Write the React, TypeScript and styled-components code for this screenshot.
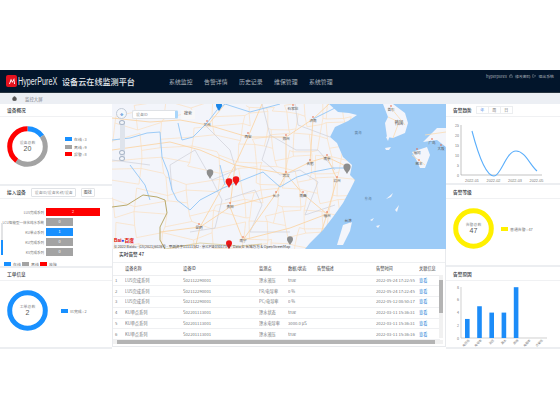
import React from 'react';
import styled, { createGlobalStyle } from 'styled-components';
import { Home, Lock, LogOut } from 'lucide-react';

const GlobalStyle = createGlobalStyle`
	html, body {
		margin: 0;
		padding: 0;
		background: #fff;
		font-family: "Noto Sans CJK SC", "Liberation Sans", sans-serif;
	}
`;

const Page = styled.div`
	width: 560px;
	height: 420px;
	padding-top: 70px;
	box-sizing: border-box;
	overflow: hidden;
	background: #fff;
`;

const TopBar = styled.header`
	height: 23px;
	background: #02152b;
	display: flex;
	align-items: center;
	padding: 0 6px;
	color: #fff;
	position: relative;
	border-bottom: 1px solid #27333f;
	box-sizing: border-box;
`;

const LogoMark = styled.div`
	width: 11px;
	height: 12px;
	border-radius: 2px;
	background: #e5121f;
	display: flex;
	align-items: center;
	justify-content: center;
`;

const Brand = styled.div`
	font-family: "Liberation Sans", sans-serif;
	font-size: 10px;
	margin-left: 1px;
	width: 44px;
	color: #e6e9ed;
	white-space: nowrap;
	transform: scaleX(0.72);
	transform-origin: left center;
`;

const AppTitle = styled.div`
	font-size: 8.1px;
	font-weight: 500;
	color: #e4e8ec;
	width: 107px;
	white-space: nowrap;
`;

const Nav = styled.nav`
	display: flex;
	gap: 12px;
`;

const NavItem = styled.span`
	font-size: 5.9px;
	color: #a9b1b9;
	width: 23px;
	white-space: nowrap;
`;

const UserMenu = styled.div`
	position: absolute;
	right: 6px;
	top: 3px;
	display: flex;
	align-items: center;
	gap: 2px;
	font-size: 3.9px;
	color: #aab2ba;
`;

const Crumbs = styled.div`
	height: 11px;
	background: #eceff4;
	display: flex;
	align-items: center;
	padding-left: 12px;
	gap: 8px;
	font-size: 4.4px;
	color: #7b8087;
`;

const Main = styled.main`
	display: grid;
	grid-template-columns: 112px 334px 114px;
	height: 245px;
`;

const Side = styled.div`
	display: flex;
	flex-direction: column;
	background: #fff;
`;

const Panel = styled.section<{ $height: number }>`
	height: ${({ $height }) => $height}px;
	flex: 0 0 auto;
	position: relative;
	border-bottom: 2px solid #eceef1;
	box-sizing: border-box;
	overflow: hidden;
`;

const PanelHead = styled.div<{ $height?: number }>`
	height: ${({ $height }) => $height ?? 13}px;
	display: flex;
	align-items: center;
	gap: 5px;
	padding-left: 7px;
	border-bottom: 1px solid #f0f1f3;
	box-sizing: border-box;
`;

const PanelTitle = styled.div`
	font-size: 4.7px;
	font-weight: 500;
	color: #33373c;
	white-space: nowrap;
`;

const Tabs = styled.div`
	display: flex;
`;

const Tab = styled.span<{ $on?: boolean }>`
	width: 13px;
	height: 8px;
	border: 1px solid #eceef0;
	margin-left: -1px;
	font-size: 4px;
	line-height: 7px;
	text-align: center;
	color: ${({ $on }) => ($on ? '#4d8fe8' : '#777')};
	box-sizing: border-box;
`;

const DonutRow = styled.div<{ $gap: number; $top: number }>`
	display: flex;
	align-items: center;
	gap: ${({ $gap }) => $gap}px;
	padding: ${({ $top }) => $top}px 0 0 7px;
`;

const DonutBox = styled.div`
	width: 41px;
	height: 41px;
	position: relative;
	flex: 0 0 auto;
`;

const DonutText = styled.div`
	position: absolute;
	inset: 0;
	display: flex;
	flex-direction: column;
	align-items: center;
	justify-content: center;
	font-size: 3.9px;
	line-height: 5px;
	color: #8a8d91;
`;

const DonutValue = styled.div`
	font-family: "Liberation Sans", sans-serif;
	font-size: 7px;
	line-height: 8px;
	color: #555;
`;

const Legend = styled.div<{ $row?: boolean }>`
	display: flex;
	flex-direction: ${({ $row }) => ($row ? 'row' : 'column')};
	gap: ${({ $row }) => ($row ? '1px' : '3.5px')};
`;

const LegendItem = styled.div<{ $row?: boolean }>`
	display: flex;
	align-items: center;
	gap: 2px;
	font-size: 3.9px;
	line-height: 4px;
	color: #777;
	white-space: nowrap;
	${({ $row }) => ($row ? 'width: 17px;' : '')}
`;

const Swatch = styled.i<{ $color: string }>`
	display: block;
	width: 7px;
	height: 4px;
	background: ${({ $color }) => $color};
`;

const FakeInput = styled.div<{ $width: number }>`
	width: ${({ $width }) => $width}px;
	height: 9px;
	border: 1px solid #dfe2e6;
	border-radius: 1px;
	box-sizing: border-box;
	background: #fff;
	font-size: 3.9px;
	line-height: 7px;
	padding-left: 3px;
	color: #8b8e92;
	white-space: nowrap;
	overflow: hidden;
`;

const FakeButton = styled.div<{ $width: number }>`
	width: ${({ $width }) => $width}px;
	height: 9px;
	border: 1px solid #e3e5e8;
	border-radius: 1px;
	box-sizing: border-box;
	background: #fff;
	font-size: 4px;
	line-height: 7px;
	text-align: center;
	color: #555;
`;

const BarList = styled.div`
	display: flex;
	flex-direction: column;
	gap: 2px;
	padding: 9px 0 0 2px;
	height: 59px;
	box-sizing: border-box;
`;

const BarRow = styled.div`
	display: flex;
	align-items: center;
	height: 8px;
`;

const BarLabel = styled.div`
	width: 44px;
	text-align: right;
	padding-right: 2px;
	box-sizing: border-box;
	font-size: 3.5px;
	color: #777;
	white-space: nowrap;
`;

const BarTrack = styled.div`
	width: 54px;
	height: 8px;
`;

const BarFill = styled.div<{ $color: string; $wide?: boolean }>`
	width: ${({ $wide }) => ($wide ? '54px' : '27px')};
	height: 8px;
	background: ${({ $color }) => $color};
	color: #fff;
	font-size: 3.8px;
	line-height: 8px;
	text-align: center;
`;

const SideScroll = styled.div`
	position: absolute;
	left: 1px;
	top: 37px;
	bottom: 11px;
	width: 2px;
	background: #e2e3e5;

	&::after {
		content: '';
		position: absolute;
		left: 0;
		right: 0;
		bottom: 0;
		height: 15px;
		background: #1890ff;
	}
`;

const BarLegend = styled.div`
	padding: 4px 0 0 4px;
`;

const Center = styled.div`
	display: flex;
	flex-direction: column;
	min-width: 0;
`;

const MapArea = styled.div`
	height: 145px;
	position: relative;
	overflow: hidden;
	background: #f3f5fb;
`;

const MapSvg = styled.svg`
	display: block;
`;

const NavDisc = styled.div`
	position: absolute;
	left: 4px;
	top: 4px;
	width: 11px;
	height: 11px;
	border-radius: 50%;
	border: 1px solid #c2cbd8;
	background: #f4f7fb;
	box-sizing: border-box;
	display: flex;
	align-items: center;
	justify-content: center;
	color: #4f8ed8;
	font-size: 4px;
`;

const ZoomRail = styled.div`
	position: absolute;
	left: 7.5px;
	top: 17px;
	width: 5px;
	height: 39px;
	background: #dfe4ec;
	border-radius: 2px;
`;

const ZoomKnob = styled.div<{ $top: number }>`
	position: absolute;
	left: -0.5px;
	top: ${({ $top }) => $top}px;
	width: 6px;
	height: 5px;
	border-radius: 50%;
	background: #f2f5f9;
	border: 1px solid #a9b6c8;
	box-sizing: border-box;
`;

const MapSearch = styled.div`
	position: absolute;
	left: 20px;
	top: 6px;
	display: flex;
	gap: 1px;
	align-items: center;
`;

const SearchInput = styled(FakeInput)`
	height: 9px;
	border-right: 3px solid #a9d6fb;
	border-radius: 2px;
`;

const SearchButton = styled(FakeButton)`
	margin-left: 2px;
	border: none;
	background: #f8f8f8;
`;

const Attribution = styled.div`
	position: absolute;
	left: 2px;
	bottom: 0;
	font-size: 3.6px;
	line-height: 5px;
	white-space: nowrap;
	color: #444;
`;

const BaiduMark = styled.div`
	position: absolute;
	left: 2px;
	bottom: 5px;
	font-family: "Liberation Sans", "Noto Sans CJK SC", sans-serif;
	font-weight: 700;
	font-size: 4.8px;
	color: #e10601;
	line-height: 6px;
`;

const BaiduDot = styled.span`
	color: #2932e1;
`;

const AlarmPanel = styled.section`
	height: 98px;
	position: relative;
	overflow: hidden;
	border: 1px solid #e8eaed;
	border-top: none;
	box-sizing: border-box;
	background: #fff;
`;

const AlarmTitle = styled.div`
	height: 14px;
	display: flex;
	align-items: center;
	padding: 0 0 4px 6px;
	font-size: 4.7px;
	font-weight: 500;
	color: #33373c;
	border-bottom: 1px solid #eef0f2;
	box-sizing: border-box;
`;

const Table = styled.table`
	border-collapse: collapse;
	table-layout: fixed;
	width: 327px;
	font-size: 4.2px;
	line-height: 5px;
	color: #73767a;
`;

const Th = styled.th<{ $width: number }>`
	width: ${({ $width }) => $width}px;
	height: 11.5px;
	padding: 0;
	text-align: left;
	font-weight: 500;
	color: #5f6266;
	background: #fff;
	border-bottom: 1px solid #edeef0;
	white-space: nowrap;
	overflow: hidden;
`;

const Td = styled.td`
	height: 9.8px;
	padding: 0;
	border-bottom: 1px solid #eff0f2;
	white-space: nowrap;
	overflow: hidden;
`;

const LinkText = styled.span`
	color: #1f7fd6;
`;

const VScroll = styled.div`
	position: absolute;
	left: 326px;
	top: 26px;
	width: 4px;
	height: 63px;
	background: #f1f1f1;

	&::after {
		content: '';
		position: absolute;
		left: 0;
		right: 0;
		top: 5px;
		height: 33px;
		background: #b4b4b4;
	}
`;

const HScroll = styled.div`
	position: absolute;
	left: 0;
	top: 91px;
	width: 330px;
	height: 4px;
	background: #f1f1f1;

	&::after {
		content: '';
		position: absolute;
		left: 4px;
		width: 318px;
		top: 0;
		bottom: 0;
		background: #b4b4b4;
	}
`;

const ChartSvg = styled.svg`
	display: block;
`;

const overviewLegend = [
	{ color: '#1890ff', text: '在线 : 3' },
	{ color: '#a3a3a3', text: '离线 : 9' },
	{ color: '#ff0000', text: '报警 : 8' },
];

const devices = [
	{ name: 'LUS完成系列', color: '#ff0000', value: '2', wide: true },
	{ name: 'LCU智能型一体化纯水系统', color: '#a3a3a3', value: '0' },
	{ name: 'KU单点系列', color: '#1890ff', value: '1' },
	{ name: 'KU完成系列', color: '#a3a3a3', value: '0' },
	{ name: 'KS完成系列', color: '#a3a3a3', value: '0' },
];

const alarms = [
	['1', 'LUS完成系列', 'S02112290001', '漂水液压', 'true', '2022-05-24 17:22:55'],
	['2', 'LUS完成系列', 'S02112290001', 'FR/电导率', '0 %', '2022-05-24 17:22:45'],
	['3', 'LUS完成系列', 'S02112290001', 'PC/电导率', '0 %', '2022-05-12 08:50:17'],
	['4', 'KU单点系列', 'S02201113001', '漂水状态', 'true', '2022-03-11 15:36:31'],
	['5', 'KU单点系列', 'S02201113001', '漂水电导率', '3000.0 μS', '2022-03-11 15:36:31'],
	['6', 'KU单点系列', 'S02201113001', '漂水液压', 'true', '2022-03-11 15:36:16'],
];

const navItems = ['系统监控', '告警详情', '历史记录', '维保管理', '系统管理'];

// light road mesh, denser to the east like the base map
function buildMesh() {
	const jitter = (a: number, b: number) => Math.sin(a * 12.9 + b * 78.2) * 4;
	const out: string[] = [];
	const xs: number[] = [];
	for (let x = 112; x < 380; x += x < 220 ? 26 : 11) xs.push(x);
	for (let yi = 0; yi < 14; yi++) {
		const y = 104 + yi * 11;
		xs.forEach((x, xi) => {
			const ax = x + jitter(x, y);
			const ay = y + jitter(y, x);
			const nx = xs[xi + 1];
			if (nx && (xi + yi) % 4 !== 0) {
				out.push(`M${ax} ${ay}L${nx + jitter(nx, y)} ${y + jitter(y, nx)}`);
			}
			if ((xi * 3 + yi) % 5 !== 0) {
				out.push(`M${ax} ${ay}L${x + jitter(x, y + 11)} ${y + 11 + jitter(y + 11, x)}`);
			}
		});
	}
	return out;
}

const mesh = buildMesh();

const roads = [
	'M112 118L150 122L180 120L208 125L248 137L286 137L313 119L329 104',
	'M208 125L225 104M248 137L262 104M248 137L235 165L230 207L243 240',
	'M286 137L286 174L275 195L243 240M286 174L303 194L327 214L316 249',
	'M313 119L310 162L286 174M310 162L327 157L348 167M327 157L337 179L327 214',
	'M235 165L286 174M235 165L200 227L195 249M235 165L200 150L170 142L112 150',
	'M230 207L275 195M230 207L200 227M200 227L160 232M243 240L290 228L327 214',
];

const koreaRoads = 'M388 117L399 122L393 138M391 108L405 125M412 155L425 165M425 135L446 132';

const borders = [
	'M262 104L270 135L262 160L280 175L300 170L318 182L305 215',
	'M295 104L298 125L330 137M270 135L296 150L318 150L335 170',
	'M205 125L230 150L236 170L212 180L195 150L170 165L172 190M225 200L255 190L262 205L250 232L290 232',
	'M305 215L335 205M212 180L222 200L215 228L190 232M112 160L150 165',
];

const rivers = [
	'M112 140L130 138L147 133L160 132L162 157L168 172L172 190L177 200L190 210L200 200L223 188L243 180L263 172L280 187L297 177L313 172L333 168L347 168',
	'M178 123L180 132L182 140L193 137L207 123L217 110L225 104',
	'M225 104L250 112L280 104M313 119L335 108',
	'M130 165L145 185L150 200M220 165L225 185',
];

const cities = [
	['兰州', 207, 124], ['西安', 248, 136], ['贵阳', 230, 206], ['昆明', 199, 227], ['南宁', 243, 240],
	['长沙', 276, 195], ['济南', 313, 120], ['郑州', 286, 138], ['合肥', 310, 163], ['南京', 327, 158],
	['杭州', 337, 180], ['武汉', 286, 175], ['南昌', 303, 195], ['福州', 327, 215], ['石家庄', 293, 108],
	['首尔', 391, 109], ['福冈', 417, 152], ['熊本', 419, 163], ['广岛', 432, 142], ['大阪', 441, 148],
] as const;

function Pin({ x, y, color, scale = 1 }: { x: number; y: number; color: string; scale?: number }) {
	return (
		<path
			transform={`translate(${x} ${y}) scale(${scale})`}
			d="M0 0C-1.2-2.4-3-3.6-3-5.8A3 3 0 0 1 3-5.8C3-3.6 1.2-2.4 0 0Z"
			fill={color}
		/>
	);
}

function Donut({ parts }: { parts: { color: string; value: number }[] }) {
	const total = parts.reduce((sum, part) => sum + part.value, 0);
	const radius = 17.8;
	const length = 2 * Math.PI * radius;
	let offset = 0;
	return (
		<svg width="41" height="41" viewBox="0 0 41 41">
			{parts.map((part) => {
				const dash = (part.value / total) * length;
				const circle = (
					<circle
						key={part.color}
						cx="20.5"
						cy="20.5"
						r={radius}
						fill="none"
						stroke={part.color}
						strokeWidth="5"
						strokeDasharray={`${dash} ${length - dash}`}
						strokeDashoffset={-offset}
						transform="rotate(-90 20.5 20.5)"
					/>
				);
				offset += dash;
				return circle;
			})}
		</svg>
	);
}

function ChinaMap() {
	return (
		<MapSvg width="334" height="145" viewBox="112 104 334 145">
			{mesh.map((d) => (
				<path key={d} d={d} fill="none" stroke="#fbdfc0" strokeWidth="0.7" />
			))}
			{borders.map((d) => (
				<path key={d} d={d} fill="none" stroke="#cfd0d8" strokeWidth="0.7" />
			))}
			{roads.map((d) => (
				<path key={d} d={d} fill="none" stroke="#fad6a8" strokeWidth="0.9" />
			))}
			<path
				d="M329 104L338 112L349 113L357 115L348 121L335 127L330 137L337 143L343 157L352 165L350 175L355 180L350 190L343 203L333 217L323 230L310 243L305 249L446 249L446 104Z"
				fill="#9ccbf7"
			/>
			<path d="M383 104L393 104L405 113L408 123L405 133L393 138L387 137L385 123L388 117Z" fill="#f3f5fb" />
			<path d="M412 152L427 147L430 155L425 168L420 168L415 157Z" fill="#f3f5fb" />
			<path d="M423 142L437 128L446 128L446 147L437 140Z" fill="#f3f5fb" />
			<path d="M337 245L343 225L352 222L350 231L343 245Z" fill="#f3f5fb" />
			<path d="M385 148L391 147L389 150L386 150ZM386 137L390 135L388 141Z" fill="#f3f5fb" />
			<path d="M386 199L393 193L391 197ZM399 205L397 212L395 210ZM370 220L374 218L372 221ZM376 226L380 225L378 228Z" fill="#f3f5fb" />
			<path d={koreaRoads} fill="none" stroke="#fbdcb4" strokeWidth="0.8" />
			{rivers.map((d) => (
				<path key={d} d={d} fill="none" stroke="#9ccbf7" strokeWidth="1" />
			))}
			<path
				d="M112 207L127 205L143 195L157 197L165 200L167 213L160 227L160 240L165 249"
				fill="none"
				stroke="#b9a96a"
				strokeWidth="1"
			/>
			<path d="M165 249L200 243L240 246L262 244" fill="none" stroke="#d8cc9c" strokeWidth="0.8" />
			{cities.map(([name, x, y]) => (
				<g key={name}>
					<circle cx={x} cy={y - 3} r="0.8" fill="#e8603c" />
					<text x={x} y={y + 2} fontSize="3.6" textAnchor="middle" fill="#555">
						{name}
					</text>
				</g>
			))}
			<text x="358" y="134" fontSize="3.6" textAnchor="middle" fill="#5d7f9e">黄海</text>
			<text x="368" y="200" fontSize="3.6" textAnchor="middle" fill="#5d7f9e">东海</text>
			<text x="399" y="124" fontSize="4.2" textAnchor="middle" fill="#444">韩国</text>
			<text x="348" y="222" fontSize="3.6" textAnchor="middle" fill="#555">台湾</text>
			<Pin x={219} y={111} color="#1a86e8" />
			<Pin x={236} y={186} color="#f01414" scale={1.1} />
			<Pin x={229} y={188} color="#f01414" scale={1.1} />
			<Pin x={229} y={249} color="#f01414" />
			<Pin x={210} y={179} color="#8d8d8d" scale={1.1} />
			<Pin x={347} y={174} color="#8d8d8d" scale={1.2} />
			<Pin x={290} y={245} color="#8d8d8d" />
		</MapSvg>
	);
}

function TrendChart() {
	const ticks = [0, 5, 10, 15, 20, 25];
	const months = ['2022-01', '2022-02', '2022-03', '2022-05'];
	return (
		<ChartSvg width="114" height="66" viewBox="446 117 114 66">
			<path d="M461 125V175H542" fill="none" stroke="#9a9a9a" strokeWidth="0.6" />
			{ticks.map((tick) => (
				<text key={tick} x="459" y={176.5 - tick * 2} fontSize="3.6" textAnchor="end" fill="#777">
					{tick}
				</text>
			))}
			{months.map((month, index) => (
				<text key={month} x={472 + index * 21.5} y="181.5" fontSize="3.8" textAnchor="middle" fill="#777" fontFamily="Liberation Sans">
					{month}
				</text>
			))}
			<path
				d="M472 131C477 150 485 176 494 176C501 176 506 151 516 151C525 151 530 165 537 171"
				fill="none"
				stroke="#5aaefb"
				strokeWidth="1.1"
			/>
		</ChartSvg>
	);
}

function CauseChart() {
	const values = [3, 5, 4, 4, 8, 0, 0];
	const labels = ['电压低', '电导率', '液压', '漏水', '故障', '电阻率', '流量低'];
	return (
		<ChartSvg width="114" height="66" viewBox="446 282 114 66">
			<path d="M461 288V339H547" fill="none" stroke="#bbb" strokeWidth="0.7" />
			{[0, 2, 4, 6, 8].map((tick) => (
				<text key={tick} x="459" y={340.5 - tick * 6.35} fontSize="3.6" textAnchor="end" fill="#777">
					{tick}
				</text>
			))}
			{values.map((value, index) => (
				<rect key={index} x={465 + index * 12.2} y={339 - value * 6.35} width="4.6" height={value * 6.35} fill="#1c8cf8" />
			))}
			{labels.map((label, index) => (
				<text
					key={label}
					x={470 + index * 12.2}
					y="341.5"
					fontSize="3"
					textAnchor="end"
					fill="#777"
					transform={`rotate(-45 ${470 + index * 12.2} 341.5)`}
				>
					{label}
				</text>
			))}
		</ChartSvg>
	);
}

export default function App() {
	return (
		<Page>
			<GlobalStyle />
			<TopBar>
				<LogoMark>
					<svg width="8" height="8" viewBox="0 0 8 8">
						<path d="M1 7L3 1.5L4.3 4.5L6.2 1L7 7H6L5.7 3.5L4.2 6L3.2 3.8L2 7Z" fill="#fff" />
					</svg>
				</LogoMark>
				<Brand>HyperPureX</Brand>
				<AppTitle>设备云在线监测平台</AppTitle>
				<Nav>
					{navItems.map((item) => (
						<NavItem key={item}>{item}</NavItem>
					))}
				</Nav>
				<UserMenu>
					hyperpurex
					<Lock size={4} />
					修改密码
					<LogOut size={4} />
					退出系统
				</UserMenu>
			</TopBar>
			<Crumbs>
				<Home size={5} color="#555" fill="#555" />
				监控大屏
			</Crumbs>
			<Main>
				<Side>
					<Panel $height={82}>
						<PanelHead>
							<PanelTitle>设备概况</PanelTitle>
						</PanelHead>
						<DonutRow $gap={17} $top={9}>
							<DonutBox>
								<Donut
									parts={[
										{ color: '#1890ff', value: 3 },
										{ color: '#a3a3a3', value: 9 },
										{ color: '#ff0000', value: 8 },
									]}
								/>
								<DonutText>
									设备总数
									<DonutValue>20</DonutValue>
								</DonutText>
							</DonutBox>
							<Legend>
								{overviewLegend.map((item) => (
									<LegendItem key={item.text}>
										<Swatch $color={item.color} />
										{item.text}
									</LegendItem>
								))}
							</Legend>
						</DonutRow>
					</Panel>
					<Panel $height={82}>
						<PanelHead>
							<PanelTitle>接入设备</PanelTitle>
							<FakeInput $width={45}>设备ID/设备名称/设备</FakeInput>
							<FakeButton $width={14}>图找</FakeButton>
						</PanelHead>
						<SideScroll />
						<BarList>
							{devices.map((device) => (
								<BarRow key={device.name}>
									<BarLabel>{device.name}</BarLabel>
									<BarTrack>
										<BarFill $color={device.color} $wide={device.wide}>
											{device.value}
										</BarFill>
									</BarTrack>
								</BarRow>
							))}
						</BarList>
						<BarLegend>
							<Legend $row>
								<LegendItem $row>
									<Swatch $color="#1890ff" />
									在线
								</LegendItem>
								<LegendItem $row>
									<Swatch $color="#a3a3a3" />
									离线
								</LegendItem>
								<LegendItem $row>
									<Swatch $color="#ff0000" />
									故障
								</LegendItem>
							</Legend>
						</BarLegend>
					</Panel>
					<Panel $height={81}>
						<PanelHead>
							<PanelTitle>工单信息</PanelTitle>
						</PanelHead>
						<DonutRow $gap={13} $top={9}>
							<DonutBox>
								<Donut parts={[{ color: '#1890ff', value: 2 }]} />
								<DonutText>
									工单总数
									<DonutValue>2</DonutValue>
								</DonutText>
							</DonutBox>
							<Legend>
								<LegendItem>
									<Swatch $color="#1890ff" />
									已完成 : 2
								</LegendItem>
							</Legend>
						</DonutRow>
					</Panel>
				</Side>
				<Center>
					<MapArea>
						<ChinaMap />
						<NavDisc>✥</NavDisc>
						<ZoomRail>
							<ZoomKnob $top={-1} />
							<ZoomKnob $top={29} />
							<ZoomKnob $top={35} />
						</ZoomRail>
						<MapSearch>
							<SearchInput $width={46}>设备ID</SearchInput>
							<SearchButton $width={14}>搜索</SearchButton>
						</MapSearch>
						<BaiduMark>
							Bai<BaiduDot>●</BaiduDot>百度
						</BaiduMark>
						<Attribution>© 2022 Baidu - GS(2021)6026号 - 甲测资字11111342 - 京ICP证030173号 - Data © 长地万方 &amp; OpenStreetMap</Attribution>
					</MapArea>
					<AlarmPanel>
						<AlarmTitle>实时告警 47</AlarmTitle>
						<Table>
							<thead>
								<tr>
									<Th $width={12} />
									<Th $width={58}>设备名称</Th>
									<Th $width={76}>设备ID</Th>
									<Th $width={29}>监测点</Th>
									<Th $width={29}>数据/状态</Th>
									<Th $width={59}>告警描述</Th>
									<Th $width={43}>告警时间</Th>
									<Th $width={21}>关联信息</Th>
								</tr>
							</thead>
							<tbody>
								{alarms.map((row) => (
									<tr key={row[0]}>
										<Td>&nbsp;&nbsp;{row[0]}</Td>
										<Td>{row[1]}</Td>
										<Td>{row[2]}</Td>
										<Td>{row[3]}</Td>
										<Td>{row[4]}</Td>
										<Td />
										<Td>{row[5]}</Td>
										<Td>
											<LinkText>查看</LinkText>
										</Td>
									</tr>
								))}
							</tbody>
						</Table>
						<VScroll />
						<HScroll />
					</AlarmPanel>
				</Center>
				<Side>
					<Panel $height={81}>
						<PanelHead>
							<PanelTitle>告警趋势</PanelTitle>
							<Tabs>
								<Tab $on>年</Tab>
								<Tab>周</Tab>
								<Tab>日</Tab>
							</Tabs>
						</PanelHead>
						<TrendChart />
					</Panel>
					<Panel $height={82}>
						<PanelHead $height={14}>
							<PanelTitle>告警等级</PanelTitle>
						</PanelHead>
						<DonutRow $gap={7} $top={9}>
							<DonutBox>
								<Donut parts={[{ color: '#fff000', value: 47 }]} />
								<DonutText>
									告警总数
									<DonutValue>47</DonutValue>
								</DonutText>
							</DonutBox>
							<Legend>
								<LegendItem>
									<Swatch $color="#fff000" />
									普通告警 : 47
								</LegendItem>
							</Legend>
						</DonutRow>
					</Panel>
					<Panel $height={82}>
						<PanelHead $height={14}>
							<PanelTitle>告警原因</PanelTitle>
						</PanelHead>
						<CauseChart />
					</Panel>
				</Side>
			</Main>
		</Page>
	);
}
